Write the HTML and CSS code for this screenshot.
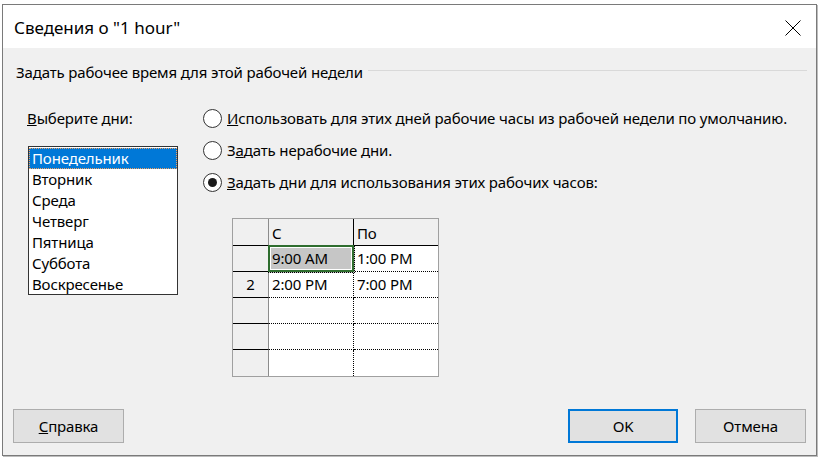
FILE: index.html
```html
<!DOCTYPE html>
<html lang="ru">
<head>
<meta charset="utf-8">
<link rel="stylesheet" href="styles.css">
</head>
<body>
<div class="dialog">
  <div class="titlebar">
    <span class="title">Сведения о "1 hour"</span>
    <svg class="close" width="16" height="16" viewBox="0 0 16 16"><path d="M0.5 0.5 L15.5 15.5 M15.5 0.5 L0.5 15.5" stroke="#000" stroke-width="1" fill="none"/></svg>
  </div>
  <div class="content">
    <div class="section">
      <span class="section-title">Задать рабочее время для этой рабочей недели</span>
      <span class="rule"></span>
    </div>
    <div class="main">
      <div class="left">
        <div class="label"><u>В</u>ыберите дни:</div>
        <ul class="days">
          <li class="selected">Понедельник</li>
          <li>Вторник</li>
          <li>Среда</li>
          <li>Четверг</li>
          <li>Пятница</li>
          <li>Суббота</li>
          <li>Воскресенье</li>
        </ul>
      </div>
      <div class="right">
        <div class="radios">
          <div class="radio"><span class="circle"></span><span><u>И</u>спользовать для этих дней рабочие часы из рабочей недели по умолчанию.</span></div>
          <div class="radio"><span class="circle"></span><span>З<u>а</u>дать нерабочие дни.</span></div>
          <div class="radio"><span class="circle checked"></span><span><u>З</u>адать дни для использования этих рабочих часов:</span></div>
        </div>
        <div class="grid">
          <div class="c hd corner"></div>
          <div class="c hd col1">С</div>
          <div class="c hd col2">По</div>

          <div class="c rh"></div>
          <div class="c d col1 sel">9:00 AM</div>
          <div class="c d col2">1:00 PM</div>

          <div class="c rh">2</div>
          <div class="c d col1">2:00 PM</div>
          <div class="c d col2">7:00 PM</div>

          <div class="c rh"></div>
          <div class="c d col1"></div>
          <div class="c d col2"></div>

          <div class="c rh"></div>
          <div class="c d col1"></div>
          <div class="c d col2"></div>

          <div class="c rh last"></div>
          <div class="c d col1 last"></div>
          <div class="c d col2 last"></div>
        </div>
      </div>
    </div>
    <div class="footer">
      <button class="btn"><u>С</u>правка</button>
      <span class="spacer"></span>
      <button class="btn default">OK</button>
      <button class="btn">Отмена</button>
    </div>
  </div>
</div>
</body>
</html>
```

FILE: styles.css
```css
* { box-sizing: border-box; }
html, body { margin: 0; padding: 0; }
body {
  background: #ffffff;
  width: 820px;
  height: 457px;
  overflow: hidden;
  font-family: "Noto Sans", "Open Sans", sans-serif;
  font-size: 15px;
  letter-spacing: -0.14px;
  color: #000;
}
.dialog {
  margin: 4px 0 0 2px;
  width: 815px;
  height: 452px;
  border: 1px solid #7a7a7a;
  box-shadow: 1px 1px 0 #bdbdbd;
  display: flex;
  flex-direction: column;
  background: #f0f0f0;
}
.titlebar {
  height: 43px;
  background: #fff;
  display: flex;
  align-items: center;
  padding: 0 15px 0 11px;
  flex: none;
}
.title {
  font-size: 17px;
  letter-spacing: 0;
  flex: 1;
  padding-top: 1px;
}
.close { display: block; margin-top: 3px; }
.content {
  flex: 1;
  display: flex;
  flex-direction: column;
}
.section {
  display: flex;
  align-items: center;
  padding: 13px 9px 0 13px;
  height: 35px;
}
.section-title { line-height: 20px; }
.rule {
  flex: 1;
  height: 1px;
  background: #d9d9d9;
  margin-left: 5px;
  margin-top: -3px;
}
.main {
  display: flex;
  padding-top: 25px;
  flex: 1;
}
.left {
  width: 200px;
  padding-left: 24px;
}
.label { line-height: 20px; }
.days {
  list-style: none;
  margin: 18px 0 0 1px;
  padding: 1px 0 0 0;
  width: 150px;
  height: 149px;
  border: 1px solid #333;
  background: #fff;
}
.days li {
  height: 21px;
  line-height: 20px;
  padding-left: 3px;
}
.days li.selected {
  background: #0078d7;
  color: #fff;
  outline: 1px dotted #f0a060;
  outline-offset: -1px;
}
.right { flex: 1; }
.radios {
  display: flex;
  flex-direction: column;
  gap: 12px;
}
.radio {
  display: flex;
  align-items: center;
  line-height: 20px;
  gap: 5px;
}
.circle {
  width: 19px;
  height: 19px;
  border: 1px solid #333;
  border-radius: 50%;
  background: #fff;
  position: relative;
  flex: none;
}
.circle.checked::after {
  content: "";
  position: absolute;
  left: 4px;
  top: 4px;
  width: 9px;
  height: 9px;
  border-radius: 50%;
  background: #1a1a1a;
}
.grid {
  margin: 26px 0 0 29px;
  display: grid;
  grid-template-columns: 36px 85px 84px;
  grid-template-rows: 27px 26px 26px 26px 26px 26px;
  width: 207px;
  border: 1px solid #a0a0a0;
  background: #fff;
}
.c {
  border-bottom: 1px solid #000;
  font-size: 15px;
  line-height: 24px;
  padding-left: 3px;
}
.hd { background: #f0f0f0; line-height: 28px; }
.corner, .rh { border-right: 1px solid #8c8c8c; background: #f0f0f0; }
.hd.col1 { border-right: 1px solid #000; }
.rh { text-align: center; padding-left: 0; }
.d { border-bottom: 1px dotted #000; }
.d.col1 { border-right: 1px dotted #000; }
.c.last { border-bottom: none; }
.rh.last { border-bottom: none; }
.d.sel {
  background: #c6c6c6;
  box-shadow: inset 0 0 0 2px #2e6d2e, inset 0 0 0 3px #fff;
  margin: -1px -1px -1px -1px;
  padding-left: 4px;
  line-height: 26px;
  position: relative;
}
.footer {
  display: flex;
  align-items: center;
  padding: 0 10px 12px 10px;
  gap: 17px;
}
.spacer { flex: 1; }
.btn {
  font-family: inherit;
  font-size: 15px;
  letter-spacing: inherit;
  width: 111px;
  height: 34px;
  background: #e1e1e1;
  border: 1px solid #adadad;
  color: #000;
  padding: 0;
}
.btn.default { border: 2px solid #0078d7; width: 110px; }
```
